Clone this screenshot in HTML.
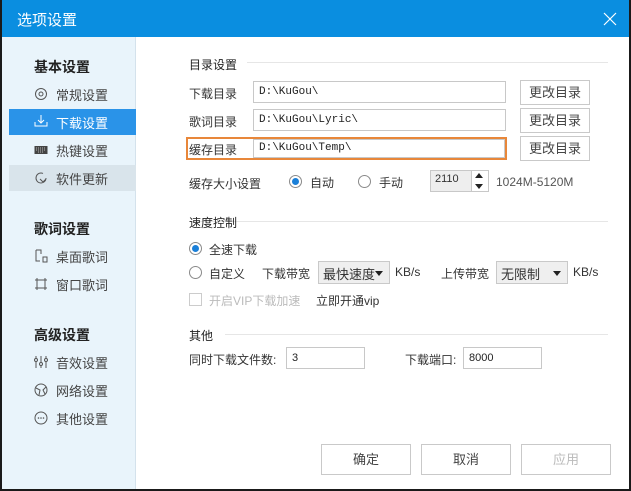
<!DOCTYPE html>
<html><head><meta charset="utf-8"><style>
*{margin:0;padding:0;box-sizing:border-box}
body{width:631px;height:491px;overflow:hidden;background:#fff;font-family:"Liberation Sans","Noto Sans CJK SC",sans-serif;font-size:12px;color:#333;position:relative}
.a{position:absolute;white-space:nowrap}
#win{position:absolute;left:0;top:0;width:631px;height:491px;border:2px solid #1a1a1a;border-top:none}
#title{position:absolute;left:0;top:0;width:631px;height:37px;background:#0a8ee0}
#side{position:absolute;left:2px;top:37px;width:134px;height:452px;background:#e9f4fb;border-right:1px solid #d4e2ec}
.h{font-size:14px;font-weight:bold;color:#222;left:34px}
.it{left:56px;font-size:13px;color:#444}
.ic{left:34px;width:14px;height:14px}
.inp{position:absolute;height:22px;border:1px solid #c8c8c8;background:#fff;font-family:"Liberation Mono","Noto Sans CJK SC",monospace;font-size:11px;padding:4px 5px;color:#222}
.btn{position:absolute;border:1px solid #c9c9c9;background:#fff;text-align:center;color:#444;font-size:13px}
.sec{font-size:12px;color:#222}
.ln{position:absolute;height:1px;background:#e6e6e6}
.rad{position:absolute;width:13px;height:13px;border:1px solid #8a8a8a;border-radius:50%;background:#fff}
.rad.on::after{content:"";position:absolute;left:2px;top:2px;width:7px;height:7px;border-radius:50%;background:#1a7fd8}
.sel{position:absolute;height:23px;border:1px solid #c9c9c9;background:#efefef;font-size:13px;padding:2px 4px}
.sel::after{content:"";position:absolute;right:6px;top:9px;border:4px solid transparent;border-top:5px solid #222}
</style></head><body>
<div id="title"></div>
<div class="a" style="left:17px;top:9px;color:#fff;font-size:15px">选项设置</div>
<svg class="a" style="left:603px;top:12px" width="14" height="14"><path d="M1 1L13 13M13 1L1 13" stroke="#fff" stroke-width="1.2"/></svg>
<div id="side"></div>
<div class="a" style="left:9px;top:109px;width:127px;height:26px;background:#2a93e8"></div>
<div class="a" style="left:9px;top:165px;width:127px;height:26px;background:#d9e4eb"></div>
<div class="a h" style="top:57px">基本设置</div>
<svg class="a ic" style="top:87px" viewBox="0 0 14 14"><circle cx="7" cy="7" r="5.5" fill="none" stroke="#555"/><circle cx="7" cy="7" r="2" fill="none" stroke="#555"/></svg>
<div class="a it" style="top:85px">常规设置</div>
<svg class="a ic" style="top:114px" viewBox="0 0 14 14"><path d="M7 1V9M4 6L7 9L10 6M1 8V12H13V8" fill="none" stroke="#fff"/></svg>
<div class="a it" style="top:113px;color:#fff">下载设置</div>
<svg class="a ic" style="top:143px" viewBox="0 0 14 14"><rect x="0.5" y="3" width="13" height="8" fill="#444"/><path d="M2 5H12M2 7H12M4 9H10" stroke="#ddd" stroke-width="0.8" stroke-dasharray="1 1"/></svg>
<div class="a it" style="top:141px">热键设置</div>
<svg class="a ic" style="top:171px" viewBox="0 0 14 14"><path d="M12 7A5 5 0 1 1 9 2.4M6 8L9 11L12 8" fill="none" stroke="#555"/></svg>
<div class="a it" style="top:169px">软件更新</div>
<div class="a h" style="top:219px">歌词设置</div>
<svg class="a ic" style="top:249px" viewBox="0 0 14 14"><path d="M2 1H7V5M2 1V12H6M9 8H13V13H9Z" fill="none" stroke="#555"/></svg>
<div class="a it" style="top:247px">桌面歌词</div>
<svg class="a ic" style="top:277px" viewBox="0 0 14 14"><path d="M3 1V13M11 1V13M1 3H13M1 11H13" fill="none" stroke="#555"/></svg>
<div class="a it" style="top:275px">窗口歌词</div>
<div class="a h" style="top:325px">高级设置</div>
<svg class="a ic" style="top:355px" viewBox="0 0 14 14"><path d="M2 1V13M7 1V13M12 1V13" stroke="#555"/><circle cx="2" cy="5" r="1.5" fill="#e9f4fb" stroke="#555"/><circle cx="7" cy="9" r="1.5" fill="#e9f4fb" stroke="#555"/><circle cx="12" cy="5" r="1.5" fill="#e9f4fb" stroke="#555"/></svg>
<div class="a it" style="top:353px">音效设置</div>
<svg class="a ic" style="top:383px" viewBox="0 0 14 14"><circle cx="7" cy="7" r="6" fill="none" stroke="#555"/><path d="M2 5L6 7L5 12M12 4L9 7L11 11" fill="none" stroke="#555"/></svg>
<div class="a it" style="top:381px">网络设置</div>
<svg class="a ic" style="top:411px" viewBox="0 0 14 14"><circle cx="7" cy="7" r="6" fill="none" stroke="#555"/><circle cx="4.5" cy="7" r=".8" fill="#555"/><circle cx="7" cy="7" r=".8" fill="#555"/><circle cx="9.5" cy="7" r=".8" fill="#555"/></svg>
<div class="a it" style="top:409px">其他设置</div>

<div class="a sec" style="left:189px;top:56px">目录设置</div><div class="ln" style="left:247px;top:62px;width:361px"></div>
<div class="a" style="left:189px;top:85px">下载目录</div><div class="inp" style="left:253px;top:81px;width:253px">D:\KuGou\</div><div class="btn" style="left:520px;top:80px;width:70px;height:25px;line-height:23px">更改目录</div>
<div class="a" style="left:189px;top:113px">歌词目录</div><div class="inp" style="left:253px;top:109px;width:253px">D:\KuGou\Lyric\</div><div class="btn" style="left:520px;top:108px;width:70px;height:25px;line-height:23px">更改目录</div>
<div class="a" style="left:186px;top:137px;width:321px;height:23px;border:2px solid #e8873a"></div>
<div class="a" style="left:189px;top:141px">缓存目录</div><div class="inp" style="left:253px;top:139px;width:252px;height:19px;padding-top:2px">D:\KuGou\Temp\</div><div class="btn" style="left:520px;top:136px;width:70px;height:25px;line-height:23px">更改目录</div>
<div class="a" style="left:189px;top:175px">缓存大小设置</div>
<div class="rad on" style="left:289px;top:175px"></div><div class="a" style="left:310px;top:174px">自动</div>
<div class="rad" style="left:358px;top:175px"></div><div class="a" style="left:379px;top:174px">手动</div>
<div class="a" style="left:430px;top:170px;width:59px;height:22px;border:1px solid #c8c8c8;background:#eee;font-size:11px;padding:2px 4px">2110</div>
<div class="a" style="left:471px;top:171px;width:17px;height:20px;border-left:1px solid #c8c8c8;background:#fff"></div>
<div class="a" style="left:475px;top:173px;border:4px solid transparent;border-bottom:5px solid #222;border-top:0"></div>
<div class="a" style="left:475px;top:184px;border:4px solid transparent;border-top:5px solid #222;border-bottom:0"></div>
<div class="a" style="left:496px;top:175px;color:#555">1024M-5120M</div>
<div class="ln" style="left:189px;top:221px;width:419px"></div>
<div class="a sec" style="left:189px;top:214px">速度控制</div>
<div class="rad on" style="left:189px;top:242px"></div><div class="a" style="left:209px;top:241px">全速下载</div>
<div class="rad" style="left:189px;top:266px"></div><div class="a" style="left:209px;top:265px">自定义</div>
<div class="a" style="left:262px;top:265px">下载带宽</div>
<div class="sel" style="left:318px;top:261px;width:72px">最快速度</div><div class="a" style="left:395px;top:265px">KB/s</div>
<div class="a" style="left:441px;top:265px">上传带宽</div>
<div class="sel" style="left:496px;top:261px;width:72px">无限制</div><div class="a" style="left:573px;top:265px">KB/s</div>
<div class="a" style="left:189px;top:293px;width:13px;height:13px;border:1px solid #ccc"></div>
<div class="a" style="left:209px;top:292px;color:#bbb">开启VIP下载加速</div>
<div class="a" style="left:316px;top:292px">立即开通vip</div>
<div class="a sec" style="left:189px;top:327px">其他</div><div class="ln" style="left:225px;top:334px;width:383px"></div>
<div class="a" style="left:189px;top:351px">同时下载文件数:</div>
<div class="inp" style="left:286px;top:347px;width:79px;font-family:'Liberation Sans',sans-serif">3</div>
<div class="a" style="left:405px;top:351px">下载端口:</div>
<div class="inp" style="left:463px;top:347px;width:79px;font-family:'Liberation Sans',sans-serif">8000</div>
<div class="btn" style="left:321px;top:444px;width:90px;height:31px;line-height:29px">确定</div>
<div class="btn" style="left:421px;top:444px;width:90px;height:31px;line-height:29px">取消</div>
<div class="btn" style="left:521px;top:444px;width:90px;height:31px;line-height:29px;color:#bbb">应用</div>
<div id="win"></div>
</body></html>
